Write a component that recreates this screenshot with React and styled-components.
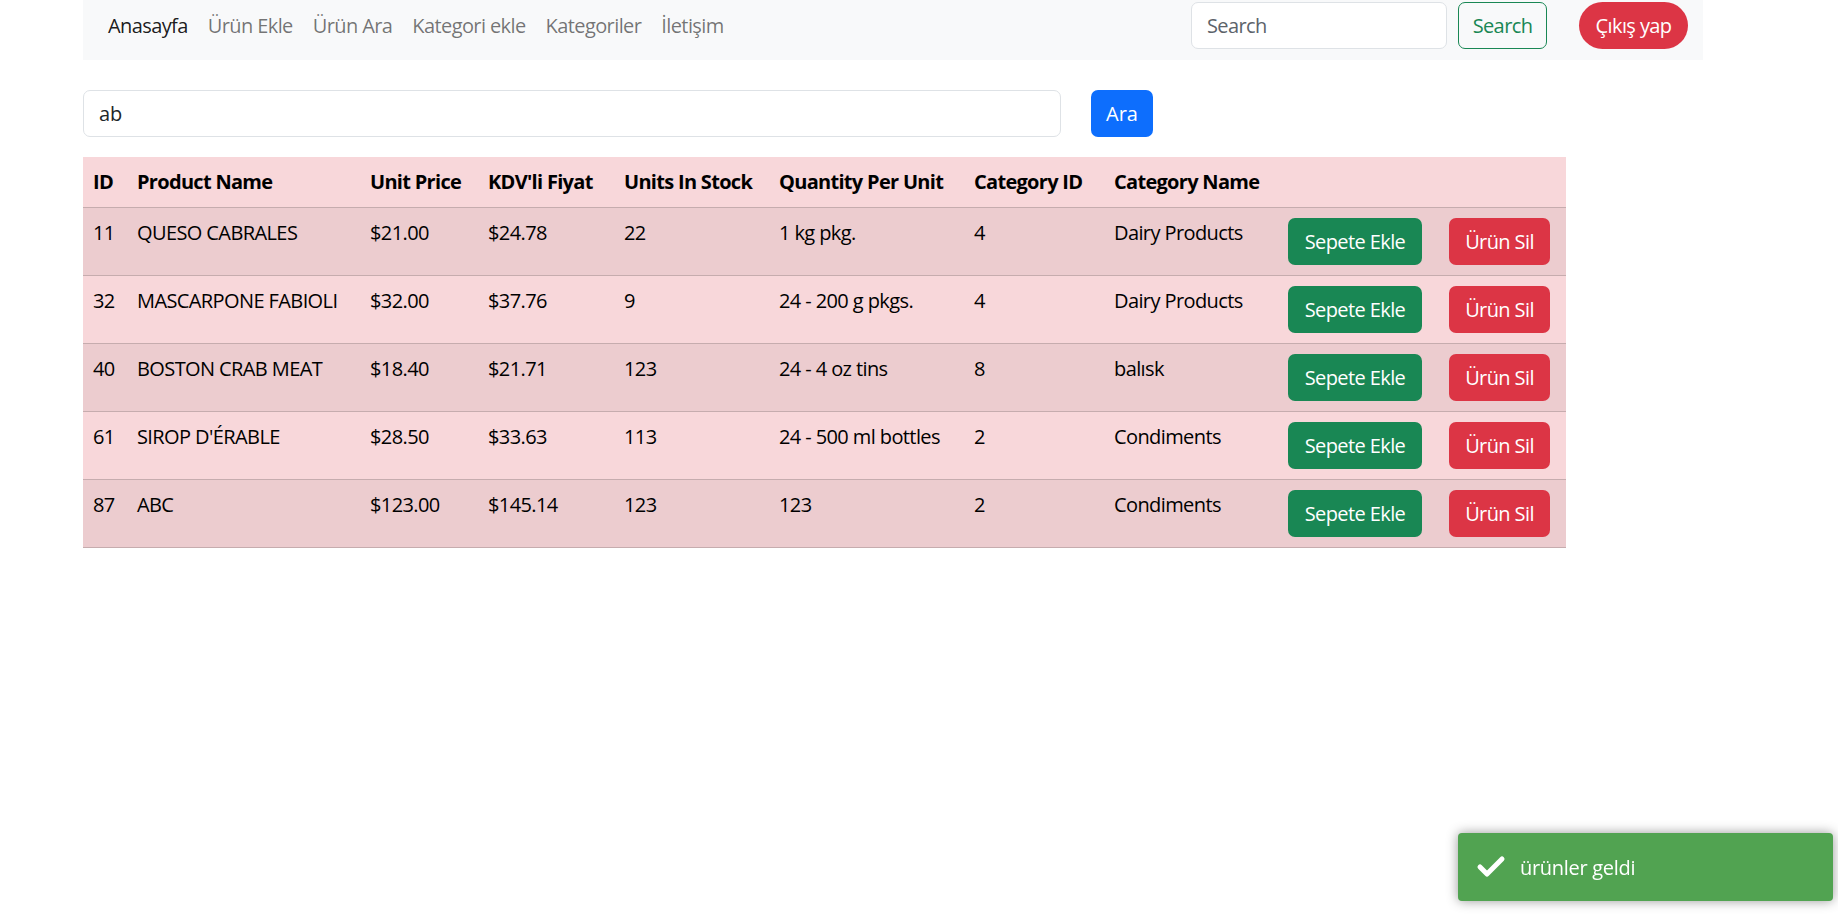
import React from "react";
import styled, { createGlobalStyle } from "styled-components";

const GlobalStyle = createGlobalStyle`
  body {
    margin: 0;
    font-family: "Open Sans", "Noto Sans", sans-serif;
    font-size: 20px;
    color: #212529;
    background: #fff;
  }
  * { box-sizing: border-box; }
`;

const products = [
  { id: 11, name: "QUESO CABRALES", price: "$21.00", kdv: "$24.78", stock: 22, qty: "1 kg pkg.", catId: 4, cat: "Dairy Products" },
  { id: 32, name: "MASCARPONE FABIOLI", price: "$32.00", kdv: "$37.76", stock: 9, qty: "24 - 200 g pkgs.", catId: 4, cat: "Dairy Products" },
  { id: 40, name: "BOSTON CRAB MEAT", price: "$18.40", kdv: "$21.71", stock: 123, qty: "24 - 4 oz tins", catId: 8, cat: "balısk" },
  { id: 61, name: "SIROP D'ÉRABLE", price: "$28.50", kdv: "$33.63", stock: 113, qty: "24 - 500 ml bottles", catId: 2, cat: "Condiments" },
  { id: 87, name: "ABC", price: "$123.00", kdv: "$145.14", stock: 123, qty: "123", catId: 2, cat: "Condiments" },
];

const columns = [
  { title: "ID", width: 44 },
  { title: "Product Name", width: 233 },
  { title: "Unit Price", width: 118 },
  { title: "KDV'li Fiyat", width: 136 },
  { title: "Units In Stock", width: 155 },
  { title: "Quantity Per Unit", width: 195 },
  { title: "Category ID", width: 140 },
  { title: "Category Name", width: 174 },
  { title: "", width: 161 },
  { title: "", width: 127 },
];

const navLinks = ["Anasayfa", "Ürün Ekle", "Ürün Ara", "Kategori ekle", "Kategoriler", "İletişim"];

export default function App() {
  return (
    <>
      <GlobalStyle />
      <Page>
        <Navbar>
          <NavList>
            {navLinks.map((l, i) => (
              <NavLink key={l} $active={i === 0}>{l}</NavLink>
            ))}
          </NavList>
          <NavRight>
            <NavSearch placeholder="Search" />
            <OutlineButton>Search</OutlineButton>
            <PillButton>Çıkış yap</PillButton>
          </NavRight>
        </Navbar>

        <SearchRow>
          <SearchInput defaultValue="ab" />
          <PrimaryButton>Ara</PrimaryButton>
        </SearchRow>

        <Table>
          <colgroup>
            {columns.map((c, i) => (
              <col key={i} style={{ width: c.width }} />
            ))}
          </colgroup>
          <thead>
            <tr>
              {columns.map((c, i) => (
                <Th key={i}>{c.title}</Th>
              ))}
            </tr>
          </thead>
          <tbody>
            {products.map((p) => (
              <Row key={p.id}>
                <Td>{p.id}</Td>
                <Td>{p.name}</Td>
                <Td>{p.price}</Td>
                <Td>{p.kdv}</Td>
                <Td>{p.stock}</Td>
                <Td>{p.qty}</Td>
                <Td>{p.catId}</Td>
                <Td>{p.cat}</Td>
                <Td><RowButton $bg="#198754" $w={134}>Sepete Ekle</RowButton></Td>
                <Td><RowButton $bg="#dc3545" $w={101}>Ürün Sil</RowButton></Td>
              </Row>
            ))}
          </tbody>
        </Table>
      </Page>

      <Toast>
        <svg width="30" height="24" viewBox="0 0 30 24">
          <polyline points="4,12 11,19 26,4" fill="none" stroke="#fff" strokeWidth="5" strokeLinecap="round" strokeLinejoin="round" />
        </svg>
        <ToastText>ürünler geldi</ToastText>
      </Toast>
    </>
  );
}

const Page = styled.div`
  padding: 0 0 0 83px;
`;

const Navbar = styled.nav`
  width: 1620px;
  height: 60px;
  background: #f8f9fa;
  display: flex;
  align-items: flex-start;
  justify-content: space-between;
  padding: 2px 15px 0;
`;

const NavList = styled.div`
  display: flex;
`;

const NavLink = styled.a`
  padding: 9px 10px;
  font-size: 20px;
  line-height: 30px;
  color: ${(p) => (p.$active ? "rgba(0,0,0,0.9)" : "rgba(0,0,0,0.55)")};
  cursor: pointer;
  letter-spacing: -0.6px;
`;

const NavRight = styled.div`
  display: flex;
  align-items: center;
`;

const NavSearch = styled.input`
  width: 256px;
  height: 47px;
  border: 1px solid #dee2e6;
  border-radius: 7px;
  padding: 0 15px;
  font: inherit;
  font-size: 20px;
  letter-spacing: -0.6px;
  color: #212529;
  background: #fff;
  margin-right: 11px;
  &::placeholder { color: #5c636a; }
`;

const OutlineButton = styled.button`
  width: 89px;
  height: 47px;
  border: 1px solid #198754;
  border-radius: 7px;
  background: transparent;
  color: #198754;
  font: inherit;
  font-size: 20px;
  letter-spacing: -0.6px;
  padding: 0;
  margin-right: 32px;
`;

const PillButton = styled.button`
  width: 109px;
  height: 47px;
  border: none;
  border-radius: 24px;
  background: #dc3545;
  color: #fff;
  font: inherit;
  font-size: 20px;
  letter-spacing: -0.6px;
  padding: 0;
`;

const SearchRow = styled.div`
  display: flex;
  gap: 30px;
  margin-top: 30px;
`;

const SearchInput = styled.input`
  width: 978px;
  height: 47px;
  border: 1px solid #dee2e6;
  border-radius: 7px;
  padding: 0 15px;
  font: inherit;
  font-size: 20px;
  color: #212529;
`;

const PrimaryButton = styled.button`
  width: 62px;
  height: 47px;
  border: none;
  border-radius: 7px;
  background: #0d6efd;
  color: #fff;
  font: inherit;
  font-size: 20px;
  padding: 0;
`;

const Table = styled.table`
  margin-top: 20px;
  width: 1483px;
  table-layout: fixed;
  border-collapse: collapse;
  color: #000;
  vertical-align: top;
`;

const Th = styled.th`
  background: #f8d7da;
  text-align: left;
  font-weight: 700;
  font-size: 20px;
  line-height: 30px;
  padding: 10px;
  letter-spacing: -0.7px;
  white-space: nowrap;
  border-bottom: 1px solid #c6acae;
`;

const Row = styled.tr`
  background: #f8d7da;
  &:nth-child(odd) { background: #eccccf; }
`;

const Td = styled.td`
  padding: 10px;
  height: 67px;
  font-size: 20px;
  line-height: 30px;
  letter-spacing: -0.6px;
  white-space: nowrap;
  vertical-align: top;
  border-bottom: 1px solid #c6acae;
`;

const RowButton = styled.button`
  display: block;
  width: ${(p) => p.$w}px;
  height: 47px;
  border: none;
  border-radius: 7px;
  background: ${(p) => p.$bg};
  color: #fff;
  font: inherit;
  font-size: 20px;
  letter-spacing: -0.6px;
  padding: 0;
`;

const Toast = styled.div`
  position: fixed;
  right: 5px;
  bottom: 13px;
  width: 375px;
  height: 68px;
  background: #51a351;
  border-radius: 4px;
  box-shadow: 0 0 12px #999;
  display: flex;
  align-items: center;
  gap: 14px;
  padding: 0 0 0 18px;
  color: #fff;
`;

const ToastText = styled.span`
  font-size: 20px;
  letter-spacing: -0.3px;
`;
